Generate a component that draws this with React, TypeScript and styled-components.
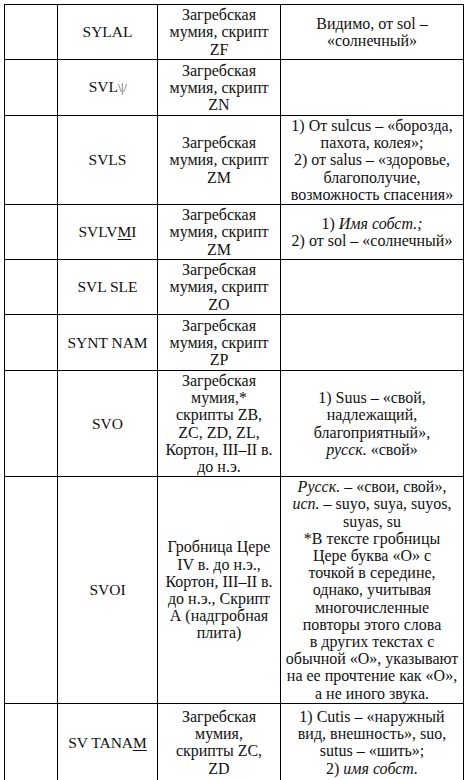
import React from "react";
import styled, { createGlobalStyle } from "styled-components";

const Global = createGlobalStyle`
  html, body { margin: 0; padding: 0; background: #fff; }
  body { font-family: "Liberation Serif", "Times New Roman", serif; color: #000; }
`;

const Page = styled.div`
  padding: 4px 0 0 4px;
`;

const Table = styled.table`
  border-collapse: collapse;
  table-layout: fixed;
  width: 459px;
  font-family: "Liberation Serif", "Times New Roman", serif;
  font-size: 16px;
  line-height: 17.2px;
  color: #000;
`;

const Col = styled.col<{ $w: number }>`
  width: ${(p) => p.$w}px;
`;

const Row = styled.tr<{ $h: number }>`
  height: ${(p) => p.$h}px;
`;

const Cell = styled.td`
  border: 1px solid #000;
  padding: 1px 1px;
  text-align: center;
  vertical-align: middle;
  white-space: nowrap;
  font-family: "Liberation Serif", "Times New Roman", serif;
  font-size: 16px;
  line-height: 17.2px;
  color: #111;
`;

const Word = styled.span`
  font-size: 15.5px;
`;

const Faint = styled.span`
  font-size: 13px;
  color: #555;
  letter-spacing: -0.5px;
`;

const U = styled.span`
  text-decoration: underline;
  text-underline-offset: 2px;
  text-decoration-thickness: 1px;
`;

const I = styled.i`
  font-style: italic;
`;

type R = { h: number; word: React.ReactNode; src: React.ReactNode; mean: React.ReactNode };

const zag = (code: string) => (
  <>
    Загребская
    <br />
    мумия, скрипт
    <br />
    {code}
  </>
);

const rows: R[] = [
  {
    h: 55,
    word: "SYLAL",
    src: zag("ZF"),
    mean: (
      <>
        Видимо, от sol –<br />
        «солнечный»
      </>
    ),
  },
  { h: 56, word: <>SVL<Faint>\|/</Faint></>, src: zag("ZN"), mean: null },
  {
    h: 89,
    word: "SVLS",
    src: zag("ZM"),
    mean: (
      <>
        1) От sulcus – «борозда,
        <br />
        пахота, колея»;
        <br />
        2) от salus – «здоровье,
        <br />
        благополучие,
        <br />
        возможность спасения»
      </>
    ),
  },
  {
    h: 55,
    word: (
      <>
        SVLV<U>M</U>I
      </>
    ),
    src: zag("ZM"),
    mean: (
      <>
        1) <I>Имя собст.;</I>
        <br />
        2) от sol – «солнечный»
      </>
    ),
  },
  { h: 55, word: "SVL SLE", src: zag("ZO"), mean: null },
  { h: 56, word: "SYNT NAM", src: zag("ZP"), mean: null },
  {
    h: 106,
    word: "SVO",
    src: (
      <>
        Загребская
        <br />
        мумия,*
        <br />
        скрипты ZB,
        <br />
        ZC, ZD, ZL,
        <br />
        Кортон, III–II в.
        <br />
        до н.э.
      </>
    ),
    mean: (
      <>
        1) Suus – «свой,
        <br />
        надлежащий,
        <br />
        благоприятный»,
        <br />
        <I>русск.</I> «свой»
      </>
    ),
  },
  {
    h: 222,
    word: "SVOI",
    src: (
      <>
        Гробница Цере
        <br />
        IV в. до н.э.,
        <br />
        Кортон, III–II в.
        <br />
        до н.э., Скрипт
        <br />
        А (надгробная
        <br />
        плита)
      </>
    ),
    mean: (
      <>
        <I>Русск.</I> – «свои, свой»,
        <br />
        <I>исп.</I> – suyo, suya, suyos,
        <br />
        suyas, su
        <br />
        *В тексте гробницы
        <br />
        Цере буква «О» с
        <br />
        точкой в середине,
        <br />
        однако, учитывая
        <br />
        многочисленные
        <br />
        повторы этого слова
        <br />в других текстах с
        <br />
        обычной «О», указывают
        <br />
        на ее прочтение как «О»,
        <br />а не иного звука.
      </>
    ),
  },
  {
    h: 78,
    word: (
      <>
        SV TANA<U>M</U>
      </>
    ),
    src: (
      <>
        Загребская
        <br />
        мумия,
        <br />
        скрипты ZC,
        <br />
        ZD
      </>
    ),
    mean: (
      <>
        1) Cutis – «наружный
        <br />
        вид, внешность», suo,
        <br />
        sutus – «шить»;
        <br />
        2) <I>имя собст.</I>
      </>
    ),
  },
];

export default function App() {
  return (
    <Page>
      <Global />
      <Table>
        <colgroup>
          <Col $w={53} />
          <Col $w={100} />
          <Col $w={123} />
          <Col $w={183} />
        </colgroup>
        <tbody>
          {rows.map((r, i) => (
            <Row key={i} $h={r.h}>
              <Cell />
              <Cell>
                <Word>{r.word}</Word>
              </Cell>
              <Cell>{r.src}</Cell>
              <Cell>{r.mean}</Cell>
            </Row>
          ))}
        </tbody>
      </Table>
    </Page>
  );
}
